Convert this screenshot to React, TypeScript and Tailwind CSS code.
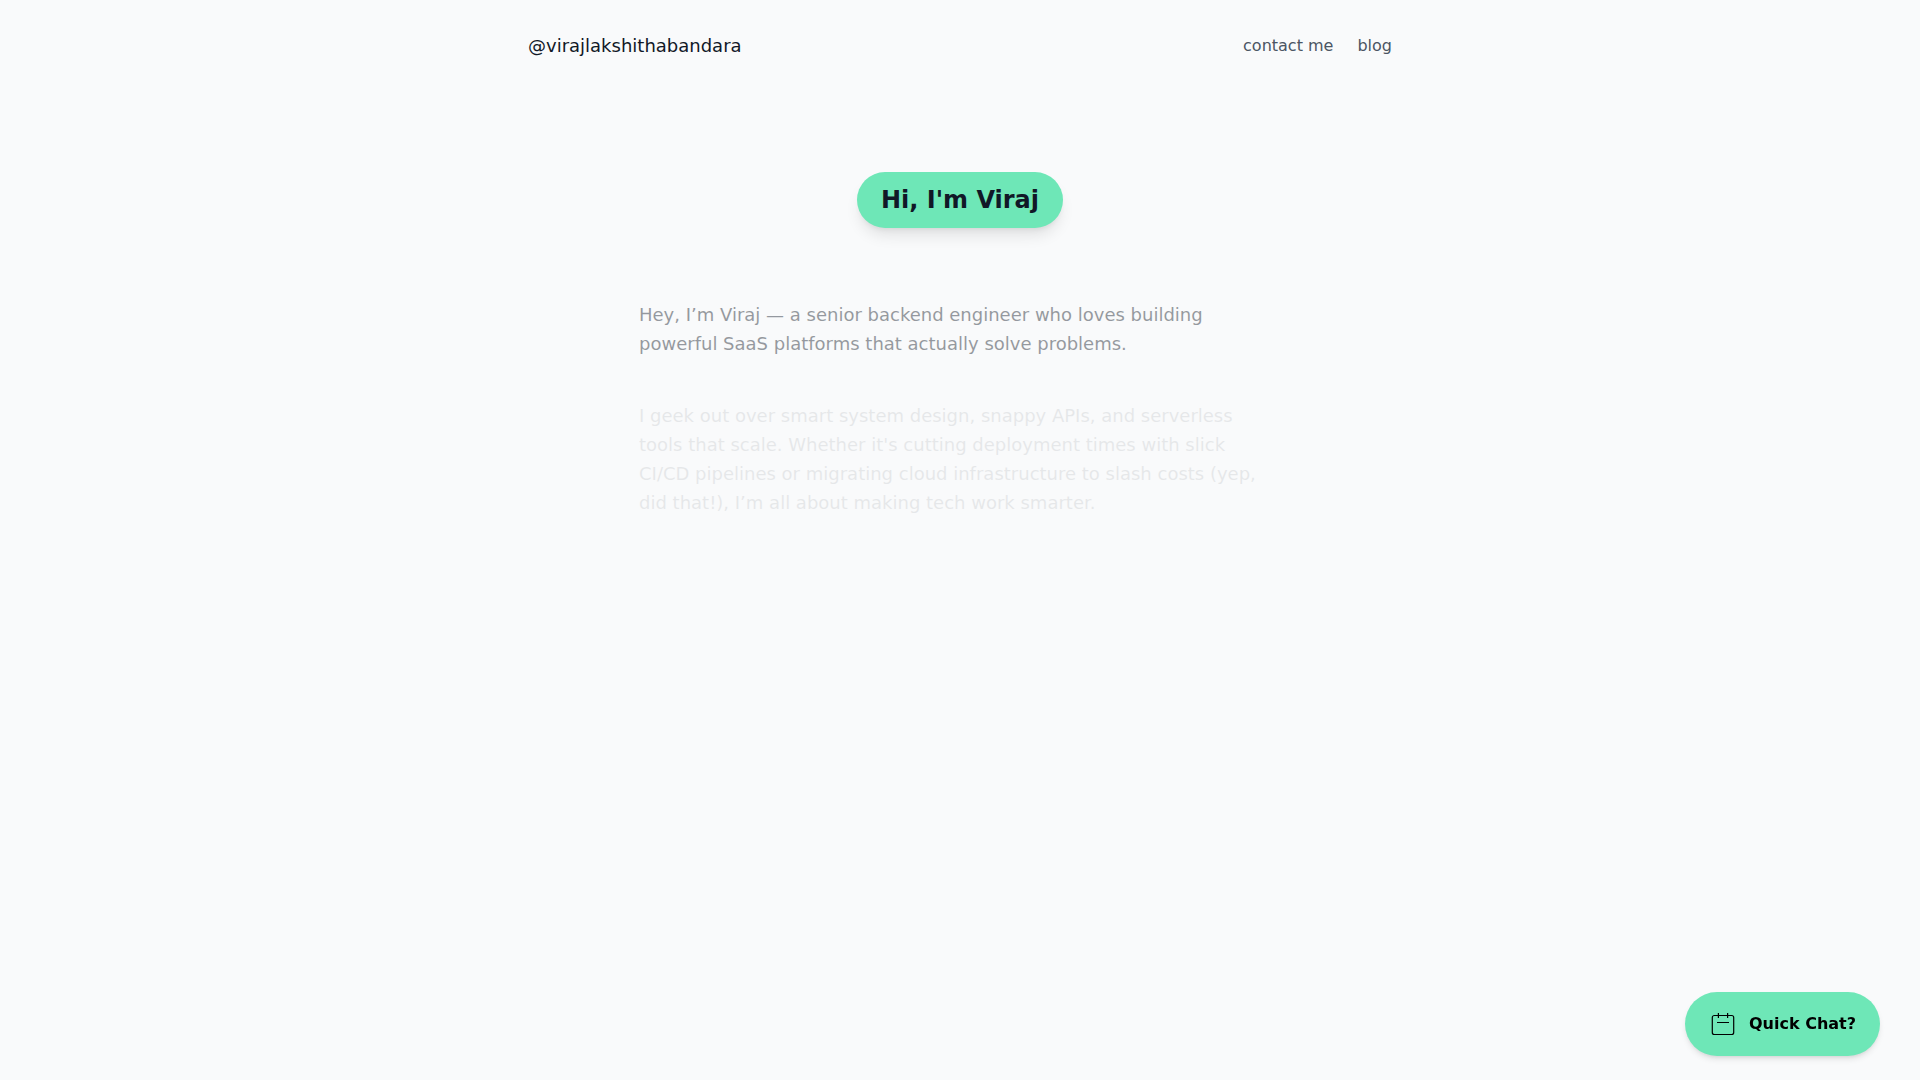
const links = [
  { label: "contact me", href: "#contact" },
  { label: "blog", href: "#blog" },
];

export default function App() {
  return (
    <div className="min-h-screen bg-[#f9fafb] font-['DejaVu_Sans',sans-serif] text-[#111827]">
      <header className="mx-auto flex max-w-4xl items-center justify-between px-4 py-8">
        <a href="#home" className="text-lg">
          @virajlakshithabandara
        </a>
        <nav className="flex gap-6 text-[#4b5563]">
          {links.map((link) => (
            <a key={link.label} href={link.href}>
              {link.label}
            </a>
          ))}
        </nav>
      </header>

      <main className="mx-auto max-w-[674px] px-4 pt-20">
        <div className="flex justify-center">
          <h1 className="rounded-full bg-[#6ee7b7] px-6 py-3 text-2xl font-bold shadow-lg">
            Hi, I'm Viraj
          </h1>
        </div>
        <div className="mt-18 space-y-[43px] text-lg leading-[29px]">
          <p className="opacity-43">
            Hey, I’m Viraj — a senior backend engineer who loves building
            powerful SaaS platforms that actually solve problems.
          </p>
          <p className="opacity-8">
            I geek out over smart system design, snappy APIs, and serverless
            tools that scale. Whether it's cutting deployment times with slick
            CI/CD pipelines or migrating cloud infrastructure to slash costs
            (yep, did that!), I’m all about making tech work smarter.
          </p>
        </div>
      </main>

      <button className="fixed right-10 bottom-6 flex h-16 items-center gap-3 rounded-full bg-[#6ee7b7] px-6 font-semibold text-black shadow-md">
        <svg
          className="size-7"
          viewBox="0 0 28 28"
          fill="none"
          stroke="currentColor"
          strokeWidth="1.2"
        >
          <rect x="3.3" y="5.5" width="21.4" height="19" rx="2" />
          <path d="M9.4 3v5M18.6 3v5M8 12.5h12" />
        </svg>
        Quick Chat?
      </button>
    </div>
  );
}
